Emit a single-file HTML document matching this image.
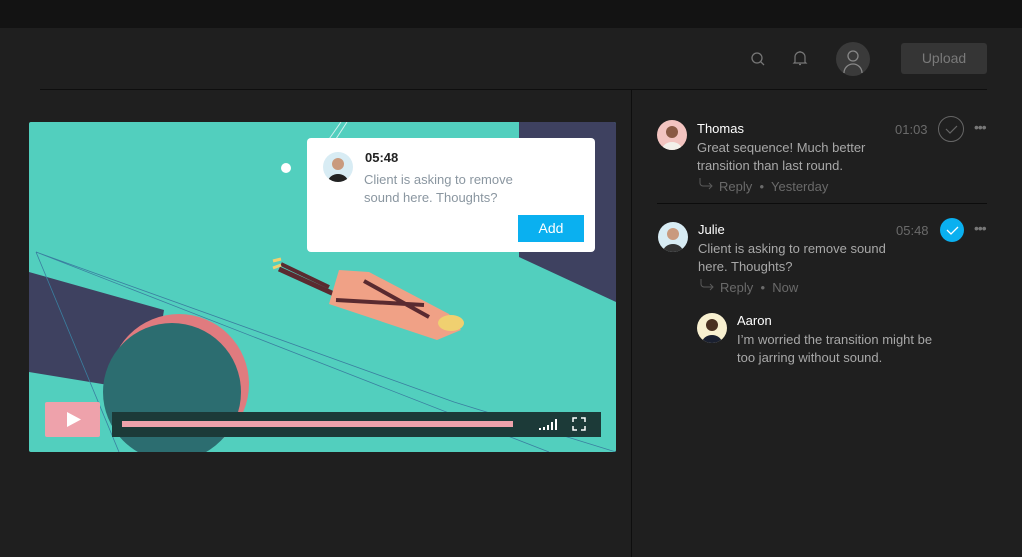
<!DOCTYPE html>
<html><head><style>
*{margin:0;padding:0;box-sizing:border-box}
body{width:1022px;height:557px;background:#1f1f1f;font-family:"Liberation Sans",sans-serif;position:relative;overflow:hidden}
.a{position:absolute}
.t{color:#fff;font-size:13px}
.g{color:#a8a8a8;font-size:13px;line-height:18px}
.m{color:#6a6a6a;font-size:13px}
.av{border-radius:50%;overflow:hidden}
</style></head><body>
<div class="a" style="left:0;top:0;width:1022px;height:28px;background:#131313"></div>
<div class="a" style="left:40px;top:89px;width:947px;height:1px;background:#0e0e0e"></div>
<div class="a" style="left:631px;top:89px;width:1px;height:468px;background:#0e0e0e"></div>
<svg class="a" style="left:750px;top:51px" width="16" height="16" viewBox="0 0 16 16"><circle cx="7" cy="7" r="5" fill="none" stroke="#777" stroke-width="1.3"/><path d="M10.5 10.5L14 14" stroke="#777" stroke-width="1.3"/></svg>
<svg class="a" style="left:792px;top:50px" width="16" height="17" viewBox="0 0 16 17"><path d="M3 12V7a5 5 0 0 1 10 0v5l1 1H2z M7 14.5h2" fill="none" stroke="#777" stroke-width="1.2"/><path d="M8 1v1" stroke="#777"/></svg>
<div class="a av" style="left:836px;top:42px;width:34px;height:34px;background:#3a3a3a"><svg width="34" height="34" viewBox="0 0 34 34"><circle cx="17" cy="14" r="5" fill="none" stroke="#888" stroke-width="1.3"/><path d="M8 31a9 9 0 0 1 18 0" fill="none" stroke="#888" stroke-width="1.3"/></svg></div>
<div class="a" style="left:901px;top:43px;width:86px;height:31px;background:#353535;border-radius:3px;color:#7a7a7a;font-size:14px;text-align:center;line-height:31px">Upload</div>
<div class="a" style="left:29px;top:122px;width:587px;height:330px;background:#52cfbe;overflow:hidden;border-radius:2px">
<svg class="a" style="left:0;top:0" width="587" height="330" viewBox="0 0 587 330">
<polygon points="484,0 587,0 587,180 490,135 490,0" fill="#3e4160"/>
<polygon points="0,150 135,188 122,270 0,250" fill="#3e4160"/>
<circle cx="150" cy="262" r="70" fill="#e07b7f"/>
<circle cx="143" cy="270" r="69" fill="#2c6d70"/>
<path d="M250 147 L305 172" stroke="#5a2a30" stroke-width="5"/>
<path d="M252 142 L300 165" stroke="#5a2a30" stroke-width="4"/>
<path d="M244 146l8 -3M244 139l8 -2" stroke="#f0d070" stroke-width="3"/>
<polygon points="310,148 340,150 420,192 432,208 408,218 300,182" fill="#f0a186"/>
<path d="M307 178 L395 183 M335 159 L400 195" stroke="#5a2a30" stroke-width="4"/>
<ellipse cx="422" cy="201" rx="13" ry="8" fill="#f0d070"/>
<path d="M7 130 L425 280 L587 330 M7 130 L90 330 M7 130 L520 330" fill="none" stroke="#3a7fa0" stroke-width="0.8"/>
<path d="M318 0 L305 20 M312 0 L298 20" stroke="#d0f0ee" stroke-width="1"/>
<circle cx="257" cy="46" r="5" fill="#fff"/>
</svg>
<div class="a" style="left:278px;top:16px;width:288px;height:114px;background:#fff;border-radius:4px">
<div class="a av" style="left:16px;top:14px;width:30px;height:30px;background:#d8ecf4"><svg width="30" height="30"><circle cx="15" cy="12" r="6" fill="#c99a7e"/><path d="M5 30a10 8 0 0 1 20 0" fill="#222"/></svg></div>
<div class="a" style="left:58px;top:12px;font-size:13px;font-weight:bold;color:#222">05:48</div>
<div class="a" style="left:57px;top:33px;font-size:13px;color:#8a96a0;line-height:18px">Client is asking to remove<br>sound here. Thoughts?</div>
<div class="a" style="left:211px;top:77px;width:66px;height:27px;background:#0ab0f0;color:#fff;font-size:14px;text-align:center;line-height:27px">Add</div>
</div>
<div class="a" style="left:16px;top:280px;width:55px;height:35px;background:#eea2ab;border-radius:2px"><svg width="55" height="35"><polygon points="22,10 22,25 36,17.5" fill="#fff"/></svg></div>
<div class="a" style="left:83px;top:290px;width:489px;height:25px;background:#1c3a38"></div>
<div class="a" style="left:93px;top:299px;width:391px;height:6px;background:#eea2ab"></div>
<svg class="a" style="left:510px;top:295px" width="50" height="14"><rect x="0" y="11" width="2" height="2" fill="#fff"/><rect x="4" y="10" width="2" height="3" fill="#fff"/><rect x="8" y="8" width="2" height="5" fill="#fff"/><rect x="12" y="5" width="2" height="8" fill="#fff"/><rect x="16" y="2" width="2" height="11" fill="#fff"/><path d="M34 5V1h4M42 1h4v4M46 9v4h-4M38 13h-4V9" fill="none" stroke="#fff" stroke-width="1.5"/></svg>
</div>
<div class="a av" style="left:657px;top:120px;width:30px;height:30px;background:#f3c4c0"><svg width="30" height="30"><circle cx="15" cy="12" r="6" fill="#8a5a44"/><path d="M5 30a10 8 0 0 1 20 0" fill="#f3f0ea"/></svg></div>
<div class="a t" style="left:697px;top:121px">Thomas</div>
<div class="a m" style="left:895px;top:122px;font-size:13px">01:03</div>
<div class="a" style="left:938px;top:116px;width:26px;height:26px;border:1.2px solid #666;border-radius:50%"><svg width="24" height="24"><path d="M7 12l4 4 7-7" fill="none" stroke="#666" stroke-width="1.2"/></svg></div>
<div class="a" style="left:974px;top:119px;color:#777;font-size:14px;letter-spacing:-1px">•••</div>
<div class="a g" style="left:697px;top:139px">Great sequence! Much better<br>transition than last round.</div>
<svg class="a" style="left:698px;top:177px" width="16" height="14"><path d="M2 1v5a3 3 0 0 0 3 3h9M11 6l3 3-3 3" fill="none" stroke="#5a5a5a" stroke-width="1"/></svg>
<div class="a m" style="left:719px;top:179px">Reply &nbsp;•&nbsp; Yesterday</div>
<div class="a" style="left:657px;top:203px;width:330px;height:1px;background:#0c0c0c"></div>
<div class="a av" style="left:658px;top:222px;width:30px;height:30px;background:#d8ecf4"><svg width="30" height="30"><circle cx="15" cy="12" r="6" fill="#c99a7e"/><path d="M5 30a10 8 0 0 1 20 0" fill="#333"/></svg></div>
<div class="a t" style="left:698px;top:222px">Julie</div>
<div class="a m" style="left:896px;top:223px">05:48</div>
<div class="a" style="left:940px;top:218px;width:24px;height:24px;background:#0ab0f0;border-radius:50%"><svg width="24" height="24"><path d="M7 12l4 4 7-7" fill="none" stroke="#fff" stroke-width="1.3"/></svg></div>
<div class="a" style="left:974px;top:220px;color:#777;font-size:14px;letter-spacing:-1px">•••</div>
<div class="a g" style="left:698px;top:240px">Client is asking to remove sound<br>here. Thoughts?</div>
<svg class="a" style="left:699px;top:278px" width="16" height="14"><path d="M2 1v5a3 3 0 0 0 3 3h9M11 6l3 3-3 3" fill="none" stroke="#5a5a5a" stroke-width="1"/></svg>
<div class="a m" style="left:720px;top:280px">Reply &nbsp;•&nbsp; Now</div>
<div class="a av" style="left:697px;top:313px;width:30px;height:30px;background:#f8f0d0"><svg width="30" height="30"><circle cx="15" cy="12" r="6" fill="#4a3020"/><path d="M5 30a10 8 0 0 1 20 0" fill="#1a2030"/></svg></div>
<div class="a t" style="left:737px;top:313px">Aaron</div>
<div class="a g" style="left:737px;top:331px">I’m worried the transition might be<br>too jarring without sound.</div>
</body></html>
